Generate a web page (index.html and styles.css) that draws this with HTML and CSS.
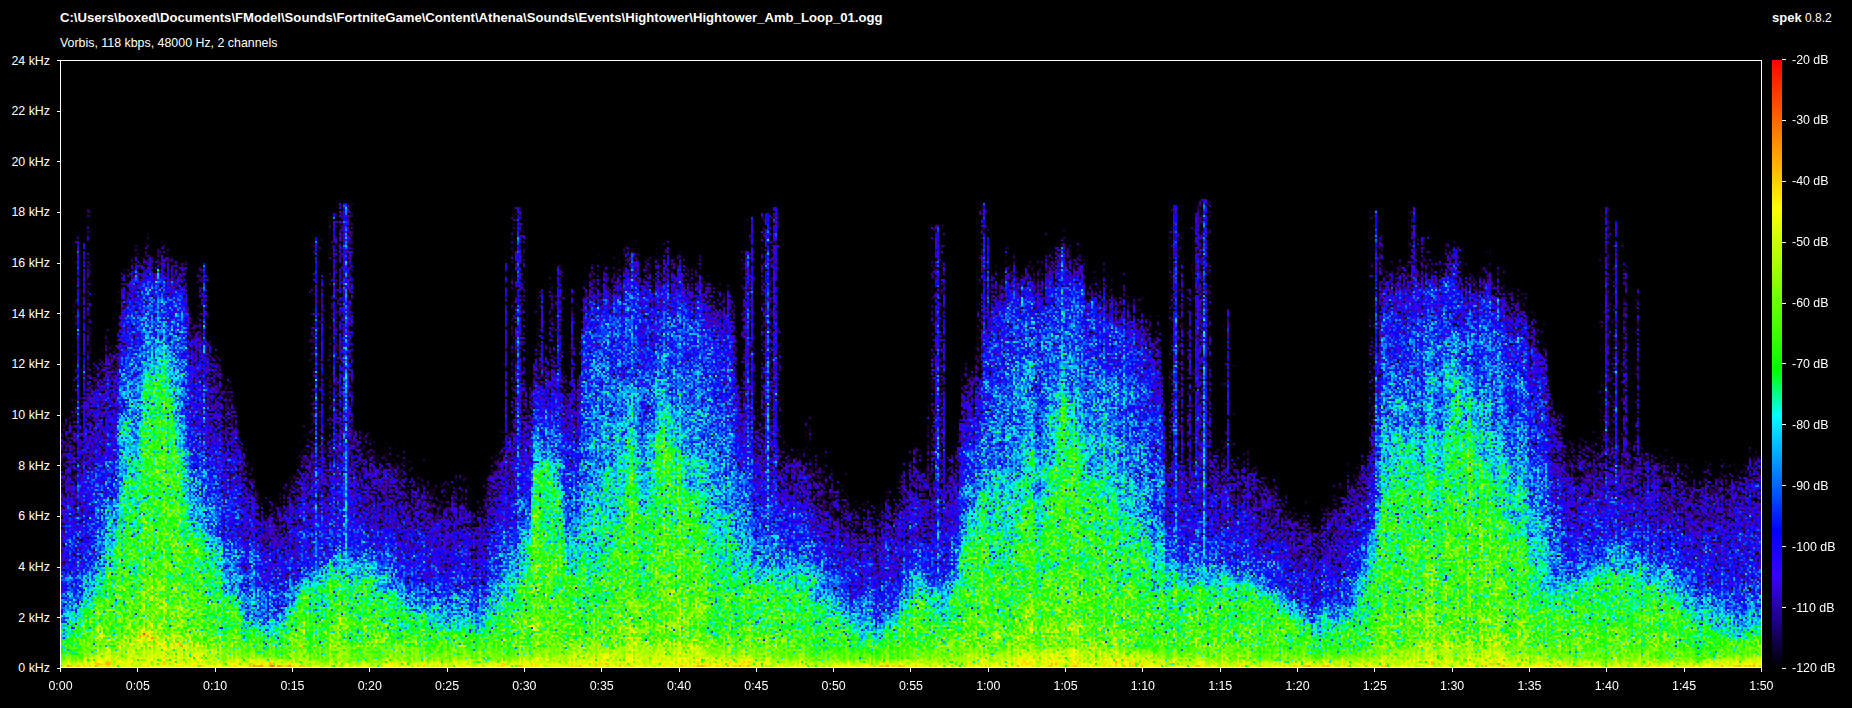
FILE: index.html
```html
<!DOCTYPE html>
<html lang="en">
<head>
    <meta charset="UTF-8">
    <title>Spek - Hightower_Amb_Loop_01.ogg</title>
    <link rel="stylesheet" href="styles.css">
</head>
<body>
    <div class="app">
        <header class="header">
            <div class="file-info">
                <div class="file-name">C:\Users\boxed\Documents\FModel\Sounds\FortniteGame\Content\Athena\Sounds\Events\Hightower\Hightower_Amb_Loop_01.ogg</div>
                <div class="file-desc">Vorbis, 118 kbps, 48000 Hz, 2 channels</div>
            </div>
            <div class="brand"><b>spek</b> <span>0.8.2</span></div>
        </header>

        <div class="freq-axis">
            <div class="ytick">24 kHz</div>
            <div class="ytick">22 kHz</div>
            <div class="ytick">20 kHz</div>
            <div class="ytick">18 kHz</div>
            <div class="ytick">16 kHz</div>
            <div class="ytick">14 kHz</div>
            <div class="ytick">12 kHz</div>
            <div class="ytick">10 kHz</div>
            <div class="ytick">8 kHz</div>
            <div class="ytick">6 kHz</div>
            <div class="ytick">4 kHz</div>
            <div class="ytick">2 kHz</div>
            <div class="ytick">0 kHz</div>
        </div>

        <div class="plot">
            <canvas id="spectrogram" width="850" height="303"></canvas>
        </div>

        <div class="legend">
            <div class="colorbar"></div>
            <div class="db-axis">
                <div class="dbtick">-20 dB</div>
                <div class="dbtick">-30 dB</div>
                <div class="dbtick">-40 dB</div>
                <div class="dbtick">-50 dB</div>
                <div class="dbtick">-60 dB</div>
                <div class="dbtick">-70 dB</div>
                <div class="dbtick">-80 dB</div>
                <div class="dbtick">-90 dB</div>
                <div class="dbtick">-100 dB</div>
                <div class="dbtick">-110 dB</div>
                <div class="dbtick">-120 dB</div>
            </div>
        </div>

        <div class="time-axis">
            <div class="xtick">0:00</div>
            <div class="xtick">0:05</div>
            <div class="xtick">0:10</div>
            <div class="xtick">0:15</div>
            <div class="xtick">0:20</div>
            <div class="xtick">0:25</div>
            <div class="xtick">0:30</div>
            <div class="xtick">0:35</div>
            <div class="xtick">0:40</div>
            <div class="xtick">0:45</div>
            <div class="xtick">0:50</div>
            <div class="xtick">0:55</div>
            <div class="xtick">1:00</div>
            <div class="xtick">1:05</div>
            <div class="xtick">1:10</div>
            <div class="xtick">1:15</div>
            <div class="xtick">1:20</div>
            <div class="xtick">1:25</div>
            <div class="xtick">1:30</div>
            <div class="xtick">1:35</div>
            <div class="xtick">1:40</div>
            <div class="xtick">1:45</div>
            <div class="xtick">1:50</div>
        </div>
    </div>

    <script src="spectrogram.js"></script>
</body>
</html>
```

FILE: styles.css
```css
html,
body {
    margin: 0;
    padding: 0;
    background: #000000;
}

body {
    font-family: "Liberation Sans", Arial, sans-serif;
    font-size: 12.4px;
    color: #ffffff;
    overflow: hidden;
}

.app {
    display: grid;
    grid-template-columns: 60px 1702px 1fr;
    grid-template-rows: 60px 608px 40px;
    width: 1852px;
    height: 708px;
}

.header {
    grid-column: 1 / 4;
    display: flex;
    justify-content: space-between;
    padding: 9px 0 0 60px;
    box-sizing: border-box;
}

.file-name {
    font-size: 13.13px;
    font-weight: bold;
    line-height: 18px;
}

.file-desc {
    margin-top: 8px;
    line-height: 16px;
}

.brand {
    width: 80px;
    font-size: 12px;
    line-height: 18px;
}

.brand b {
    font-size: 13px;
}

.freq-axis {
    display: flex;
    flex-direction: column;
    justify-content: space-between;
    height: 609px;
}

.ytick {
    height: 1px;
    display: flex;
    align-items: center;
    justify-content: flex-end;
    line-height: 14px;
}

.ytick::after {
    content: "";
    width: 3px;
    height: 1px;
    margin-left: 7px;
    background: #ffffff;
}

.plot {
    height: 608px;
    box-sizing: border-box;
    border: 1px solid #ffffff;
}

.plot canvas {
    display: block;
    width: 1700px;
    height: 606px;
    image-rendering: pixelated;
}

.legend {
    display: flex;
    padding-left: 10px;
}

.colorbar {
    width: 10px;
    height: 608px;
    background: linear-gradient(to top,
        #000000 0%,
        #3900ff 15.1%,
        #0000ff 22.6%,
        #00ffff 41.5%,
        #00ff00 49%,
        #ffff00 75.5%,
        #ff0000 100%);
}

.db-axis {
    display: flex;
    flex-direction: column;
    justify-content: space-between;
    height: 610px;
    margin-top: -1px;
}

.dbtick {
    height: 1px;
    display: flex;
    align-items: center;
    line-height: 14px;
    white-space: nowrap;
}

.dbtick::before {
    content: "";
    width: 4px;
    height: 1px;
    margin-right: 6px;
    background: #ffffff;
}

.time-axis {
    grid-column: 2 / 3;
    display: flex;
    justify-content: space-between;
    width: 1702px;
}

.xtick {
    width: 1px;
    display: flex;
    flex-direction: column;
    align-items: center;
    white-space: nowrap;
    line-height: 14px;
}

.xtick::before {
    content: "";
    flex: none;
    width: 1px;
    height: 4px;
    margin-bottom: 7px;
    background: #ffffff;
}
```

FILE: spectrogram.js
```js
const canvas = document.getElementById('spectrogram');
const ctx = canvas.getContext('2d');
const W = canvas.width;
const H = canvas.height;
const DURATION = 110;
const MAX_KHZ = 24;

// Seeded so that every render gives the same picture
let seed = 20240518;
function rnd() {
    seed = (seed + 0x6d2b79f5) | 0;
    let x = Math.imul(seed ^ (seed >>> 15), 1 | seed);
    x = (x + Math.imul(x ^ (x >>> 7), 61 | x)) ^ x;
    return ((x ^ (x >>> 14)) >>> 0) / 4294967296;
}

function gauss() {
    return (rnd() + rnd() + rnd() + rnd() - 2) * 1.73;
}

// time (s), then the height (kHz) of the -55, -70, -98 and -114 dB contours
const contours = [
    [0, .4, 1, 3.5, 9], [1, .5, 1.6, 4, 10], [2, .8, 2.5, 5, 11], [3, 1.5, 3.5, 7, 12],
    [3.6, 1.8, 5, 9, 12.5], [4, 2.2, 7, 14.8, 15.6], [5, 3, 8, 15, 15.7], [5.5, 3, 11, 15.2, 15.9],
    [7, 2.6, 11.5, 15.2, 15.9], [7.5, 2.4, 8, 15, 15.7], [8, 2.2, 6, 14.5, 15.6], [8.4, 2, 5, 9.5, 13.5],
    [9, 1.8, 4.5, 9, 13], [10, 1.2, 4, 8, 12], [11, .9, 2.5, 6, 10.5], [12, .7, 1.5, 4, 7.5],
    [13, .6, 1.1, 3, 5.5], [14, .6, 1.3, 3, 6], [15, .6, 2, 3.5, 7], [16, .6, 3, 4.5, 8.5],
    [18, .5, 3.5, 5.5, 9], [20, .5, 3.4, 5, 8.5], [22, .5, 2.2, 4, 7.5], [24, .5, 1.4, 3.5, 6.5],
    [26, .6, 1.4, 3.5, 6.5], [27, .6, 1.2, 2.5, 5.5], [28, .6, 2.2, 4.5, 7.5], [29.5, .7, 3, 6, 9.5],
    [30.3, .8, 4, 7.5, 10.5], [30.6, 1, 7.5, 10, 11.5], [31.5, 1.1, 8, 10.5, 12], [32.3, 1, 6.5, 10, 11.5],
    [32.8, .9, 3.5, 7.5, 10.5], [33.5, 1, 3.5, 8, 11], [33.8, 1, 3.2, 13.8, 14.8], [35.5, 1.4, 3.8, 14, 14.9],
    [36.3, 1.5, 6, 14, 15], [37, 2, 8, 15.5, 16.3], [37.6, 1.9, 5, 14, 15.2], [38, 1.9, 6.5, 14.2, 15.5],
    [38.8, 2, 9.5, 14.5, 15.7], [39.5, 2, 8.5, 14.4, 15.6], [40.3, 1.8, 7, 14.2, 15.3], [41.2, 1.6, 5.5, 13.8, 15],
    [42.5, 1.2, 4.2, 13.3, 14.5], [43.5, 1, 3.5, 12.5, 14], [43.9, 1, 3.4, 8, 10.5], [45, .8, 3.2, 6.5, 9.5],
    [47, .6, 3, 5.5, 8], [49, .5, 2.5, 5, 7.5], [51, .5, 1.5, 3.5, 6], [53, .5, 1, 2.5, 5.5],
    [54.5, .6, 2, 3.8, 7], [55.5, .6, 2.8, 4.5, 8], [57, .7, 2, 4, 7], [58, .8, 3, 5.5, 8],
    [58.3, 1, 4.5, 8, 11], [59.5, 1.1, 6, 9.5, 11.5], [60.2, 1.1, 4, 13.8, 14.9], [62, 1.5, 5, 14.5, 15.5],
    [62.6, 1.5, 7, 15, 15.6], [63.2, 1.5, 5, 14.5, 15.4], [64.2, 1.8, 7, 15, 15.6], [64.8, 2.2, 11, 15.8, 16.5],
    [65.4, 1.8, 8.5, 14.8, 15.5], [66.5, 1.7, 7, 14.3, 15.1], [68, 1.5, 6.3, 13.8, 14.6], [69, 1.3, 4.5, 13, 14],
    [70.5, 1.1, 3.8, 12, 13.2], [71.1, .9, 3.5, 11, 12.5], [71.5, .8, 3.3, 6, 8.5], [73, .7, 3, 5.5, 8],
    [75, .6, 3.2, 5, 8], [77, .5, 3, 4.5, 7.5], [79, .5, 2, 3.5, 6], [81, .5, 1.2, 2.5, 5],
    [83, .6, 1.5, 3.5, 6.5], [84.5, .7, 3, 5.5, 8], [85.1, .9, 4, 8, 11], [85.5, 1.1, 6.5, 13.5, 14.8],
    [86.5, 1.5, 8, 14.5, 15.3], [88, 1.8, 7, 14.8, 15.5], [89.5, 1.8, 7.5, 14.8, 15.6], [90.2, 2.2, 11.5, 15.8, 16.5],
    [90.7, 1.9, 9.5, 14.8, 15.6], [91.5, 1.7, 9, 14.5, 15.3], [92.5, 1.4, 6.5, 14, 15], [93.5, 1.2, 5.5, 13.5, 14.5],
    [94.6, 1, 5, 13, 14], [95, .9, 3.5, 12, 13.5], [96, .8, 3, 11, 12.5], [96.5, .7, 2.2, 6, 9.5],
    [98, .5, 3, 4.5, 8], [100, .5, 3.5, 5, 8.5], [102, .5, 3.5, 5, 8], [104, .5, 2.8, 4.5, 7.5],
    [106, .5, 1.5, 3.5, 7], [108, .6, 1.1, 2.8, 7], [110, .8, 1.3, 3.2, 8]
];

// Narrow transients: time (s), top (kHz), level (dB)
const streaks = [
    [1.07, 17.2, -88], [1.5, 16.8, -98], [1.8, 18.1, -96], [4, 15.6, -86],
    [9.25, 16, -80], [16.5, 17, -84], [16.9, 15.5, -90], [17.7, 18, -86],
    [18.4, 18.4, -72], [28.8, 16, -94], [29.4, 16.5, -92], [29.6, 18.2, -80],
    [31.1, 15, -88], [31.7, 15.5, -92], [32.2, 16, -82], [33.1, 15, -92], [37, 16.4, -76],
    [44.4, 16.5, -80], [44.7, 17.8, -90], [45.7, 18, -78], [46.2, 18.2, -80],
    [56.7, 17.5, -80], [57.1, 16, -92], [59.7, 18.4, -84], [60, 17, -88],
    [64.8, 16.6, -72], [62.6, 15.2, -82], [72.1, 18.3, -80], [72.5, 16, -92], [73, 15, -90],
    [73.5, 18, -84], [74, 18.5, -76], [75.5, 14.2, -90], [85.1, 18.1, -84],
    [85.4, 17, -90], [87.5, 18.2, -84], [88.1, 17, -88], [90.2, 16.6, -72],
    [100, 18.2, -86], [100.6, 17.7, -90], [101.2, 16, -94], [102, 15, -96], [6.3, 15.8, -76]
];

// Where the lowest band runs hot, towards orange
const hotSpots = [0.5, 13.7, 29, 43.5, 53.4, 69.4, 80.9, 97, 109];

function contourAt(t) {
    let i = 0;
    while (i < contours.length - 2 && contours[i + 1][0] <= t) i++;
    const a = contours[i];
    const b = contours[i + 1];
    const k = (t - a[0]) / (b[0] - a[0]);
    return a.map((v, n) => v + (b[n] - v) * k);
}

// Faint purple hairlines, only just over the contour they stand on
for (let i = 0; i < 110; i++) {
    const t = rnd() * DURATION;
    const c = contourAt(t);
    const over = c[4] > 13 ? 0.4 : 3;
    streaks.push([t, c[4] + rnd() * rnd() * over, -102 - rnd() * 5]);
}

// Coarse random field, for the blotches in the noise
const PATCH_W = 140;
const PATCH_H = 60;
const patches = [];
for (let i = 0; i < (PATCH_W + 1) * (PATCH_H + 1); i++) patches.push(gauss());

function patchAt(t, f) {
    const px = t / DURATION * PATCH_W;
    const py = f / MAX_KHZ * PATCH_H;
    const ix = Math.min(PATCH_W - 1, Math.floor(px));
    const iy = Math.min(PATCH_H - 1, Math.floor(py));
    const kx = px - ix;
    const ky = py - iy;
    const row = PATCH_W + 1;
    const top = patches[iy * row + ix] * (1 - kx) + patches[iy * row + ix + 1] * kx;
    const low = patches[(iy + 1) * row + ix] * (1 - kx) + patches[(iy + 1) * row + ix + 1] * kx;
    return top * (1 - ky) + low * ky;
}

function levelAt(c, f, base) {
    if (f < c[1]) return base + (-55 - base) * Math.pow(f / c[1], 0.7);
    if (f < c[2]) return -55 - 15 * Math.pow((f - c[1]) / (c[2] - c[1]), 0.5);
    if (f < c[3]) return -70 - 28 * Math.pow((f - c[2]) / (c[3] - c[2]), 0.62);
    if (f < c[4]) return -98 - 16 * (f - c[3]) / (c[4] - c[3]);
    return -114 - 18 * (f - c[4]);
}

// Same colour ramp as the legend
function palette(db) {
    const level = Math.min(1, Math.max(0, (db + 120) / 100)) * 0.6625;
    let r = 0, g = 0, b = 0;
    if (level < 0.15) {
        r = (0.15 - level) / 0.225;
        b = 1;
    } else if (level < 0.275) {
        g = (level - 0.15) / 0.125;
        b = 1;
    } else if (level < 0.325) {
        g = 1;
        b = (0.325 - level) / 0.05;
    } else if (level < 0.5) {
        r = (level - 0.325) / 0.175;
        g = 1;
    } else {
        r = 1;
        g = (0.6625 - level) / 0.1625;
    }
    const cf = level < 0.1 ? level / 0.1 : 1;
    return [r * cf * 255, g * cf * 255, b * cf * 255];
}

const img = ctx.createImageData(W, H);

// Slowly wandering column gain, gives the vertical grain of the original
let drift = 0;
for (let x = 0; x < W; x++) {
    const t = (x + 0.5) / W * DURATION;
    const c = contourAt(t);
    const jitter = 1 + gauss() * 0.02;
    c[3] *= jitter;
    c[4] *= jitter;
    c[1] *= 0.5;
    let base = -44 + 1.5 * Math.sin(t * 0.62);
    hotSpots.forEach(h => {
        base += 7 * Math.exp(-Math.pow((t - h) / 1.6, 2));
    });
    drift = drift * 0.6 + gauss() * 1.3;
    const colGain = drift + gauss() * 1.6;

    const active = [];
    streaks.forEach(s => {
        const d = (t - s[0]);
        const core = Math.exp(-d * d / 0.008);
        const flank = s[2] > -92 ? Math.exp(-d * d / 0.05) : 0;
        if (core > 0.02 || flank > 0.02) active.push({ top: s[1], db: s[2], core, flank });
    });

    for (let y = 0; y < H; y++) {
        const f = (H - y - 0.5) / H * MAX_KHZ;
        let db = levelAt(c, f, base) + patchAt(t, f) * 3.5 * Math.min(1, f);

        active.forEach(s => {
            if (f >= s.top) return;
            const v = s.db - 14 * (f / s.top);
            db = Math.max(db, v - (1 - s.core) * 30, v - 20 - (1 - s.flank) * 25);
        });

        const spread = f < 0.8 ? 3 : 6.5;
        db += colGain + gauss() * spread;
        // Dark flecks in the noise
        if (rnd() < 0.06) db -= 8 + rnd() * 16;

        const col = palette(db);
        const p = (y * W + x) * 4;
        img.data[p] = col[0];
        img.data[p + 1] = col[1];
        img.data[p + 2] = col[2];
        img.data[p + 3] = 255;
    }
}
ctx.putImageData(img, 0, 0);
```
